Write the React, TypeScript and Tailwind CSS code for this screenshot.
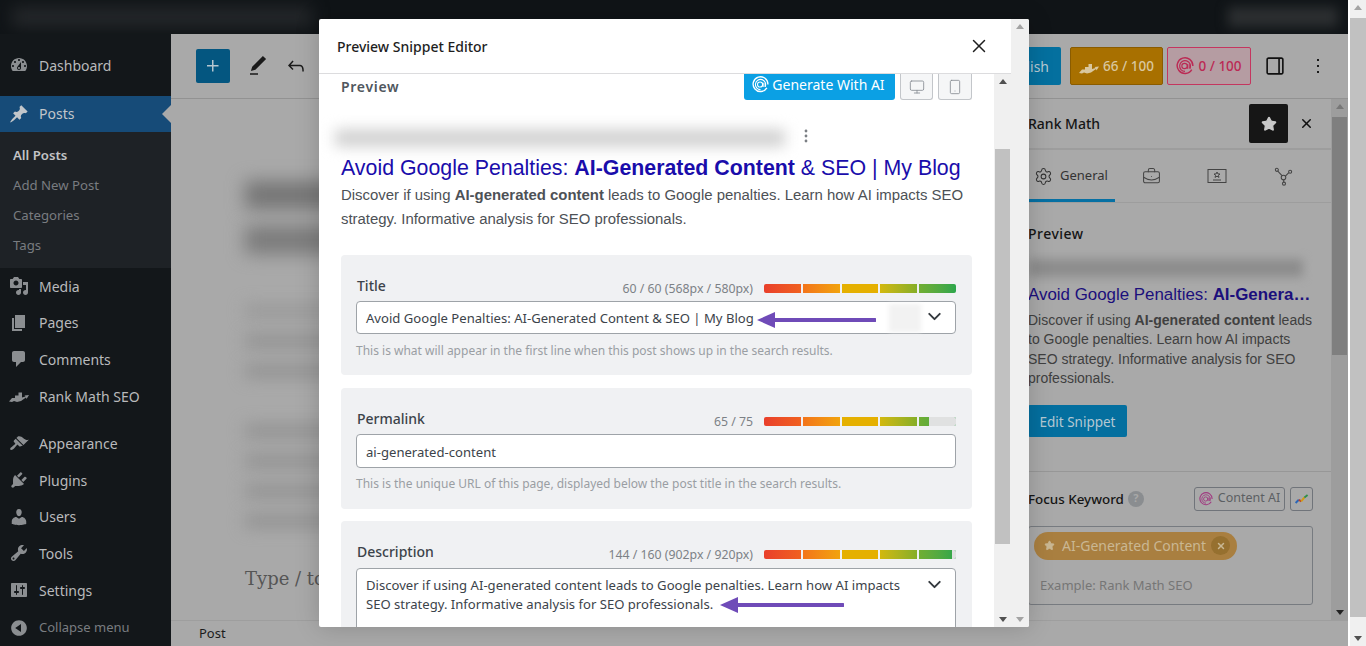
import { ChevronDown, Monitor, Settings, Smartphone, BriefcaseBusiness, Star, X } from 'lucide-react';

const noto = 'font-["Noto_Sans",sans-serif]';
const arial = 'font-["Liberation_Sans",sans-serif]';

const icons = {
  dashboard:
    'M3.76 16h12.48c1.1-1.37 1.76-3.11 1.76-5 0-4.42-3.58-8-8-8s-8 3.58-8 8c0 1.89.66 3.63 1.76 5zM10 4c.55 0 1 .45 1 1s-.45 1-1 1-1-.45-1-1 .45-1 1-1zM6 6c.55 0 1 .45 1 1s-.45 1-1 1-1-.45-1-1 .45-1 1-1zm8 0c.55 0 1 .45 1 1s-.45 1-1 1-1-.45-1-1 .45-1 1-1zm-5.37 5.55L12 7v6c0 1.1-.9 2-2 2s-2-.9-2-2c0-.57.24-1.08.63-1.45zM4 10c.55 0 1 .45 1 1s-.45 1-1 1-1-.45-1-1 .45-1 1-1zm12 0c.55 0 1 .45 1 1s-.45 1-1 1-1-.45-1-1 .45-1 1-1zm-5 3c0-.55-.45-1-1-1s-1 .45-1 1 .45 1 1 1 1-.45 1-1z',
  posts:
    'M10.44 3.02l1.82-1.82 6.36 6.35-1.83 1.82c-1.05-.68-2.48-.57-3.41.36l-.75.75c-.92.93-1.04 2.35-.35 3.41l-1.83 1.82-2.41-2.41-2.8 2.79c-.42.42-3.38 2.71-3.8 2.29s1.86-3.39 2.28-3.81l2.79-2.79L4.1 9.36l1.83-1.82c1.05.69 2.48.57 3.4-.36l.75-.75c.93-.92 1.05-2.35.36-3.41z',
  media:
    'M13 11V4c0-.55-.45-1-1-1h-1.67L9 1H5L3.67 3H2c-.55 0-1 .45-1 1v7c0 .55.45 1 1 1h10c.55 0 1-.45 1-1zM7 4.5c1.38 0 2.5 1.12 2.5 2.5S8.38 9.5 7 9.5 4.5 8.38 4.5 7 5.62 4.5 7 4.5zM14 6h5v10.5c0 1.38-1.12 2.5-2.5 2.5S14 17.88 14 16.5s1.12-2.5 2.5-2.5c.17 0 .34.02.5.05V9h-3V6zm-4 8.05V13h2v3.5c0 1.38-1.12 2.5-2.5 2.5S7 17.88 7 16.5 8.12 14 9.5 14c.17 0 .34.02.5.05z',
  pages: 'M6 15V2h10v13H6zm-1 1h8v2H3V5h2v11z',
  comments: 'M5 2h9c1.1 0 2 .9 2 2v7c0 1.1-.9 2-2 2h-2l-5 5v-5H5c-1.1 0-2-.9-2-2V4c0-1.1.9-2 2-2z',
  rank: 'M0 15.5L3 12H6V9.5H9.5V6.5H13V11.5L16.5 10.5L15.5 9.5L20 9L17.5 13L17 11.5L12 15L8 16L5 15L3 16Z',
  appearance:
    'M14.48 11.06L7.41 3.99l1.5-1.5c.5-.56 2.3-.47 3.51.32 1.21.8 1.43 1.28 2.91 2.1 1.18.64 2.45 1.26 4.45.85zm-.71.71L6.7 4.7 4.93 6.47c-.39.39-.39 1.02 0 1.41l1.06 1.06c.39.39.39 1.03 0 1.42-.6.6-1.43 1.11-2.21 1.69-.35.26-.7.53-1.01.84C1.43 13.23.76 14.89 1.5 15.63s2.4.07 3.74-1.27c.32-.32.58-.67.84-1.01.58-.78 1.09-1.61 1.69-2.21.39-.39 1.02-.39 1.41 0l1.06 1.06c.39.39 1.02.39 1.41 0z',
  plugins:
    'M13.11 4.36L9.87 7.6 8 5.73l3.24-3.24c.35-.34 1.05-.2 1.56.32.52.51.66 1.21.31 1.55zm-8 1.77l.91-1.12 9.01 9.01-1.19.84c-.71.71-2.63 1.16-3.82 1.16H6.14L4.9 17.26c-.59.59-1.54.59-2.12 0-.59-.58-.59-1.53 0-2.12l1.24-1.24v-3.88c0-1.13.4-3.19 1.09-3.89zm7.26 3.97l3.24-3.24c.34-.35 1.04-.21 1.55.31.52.51.66 1.21.31 1.55l-3.24 3.25z',
  users:
    'M10 9.25c-2.27 0-2.73-3.44-2.73-3.44C7 4.02 7.82 2 9.97 2c2.16 0 2.98 2.02 2.71 3.81 0 0-.41 3.44-2.68 3.44zm0 2.57L12.72 10c2.39 0 4.52 2.33 4.52 4.53v2.49s-3.65 1.13-7.24 1.13c-3.65 0-7.24-1.13-7.24-1.13v-2.49c0-2.25 1.94-4.48 4.47-4.48z',
  tools:
    'M16.68 9.77c-1.34 1.34-3.3 1.67-4.95.99l-5.41 6.52c-.99.99-2.59.99-3.58 0s-.99-2.59 0-3.57l6.52-5.42c-.68-1.65-.35-3.61.99-4.95 1.28-1.28 3.12-1.62 4.72-1.06l-2.89 2.89 2.82 2.82 2.86-2.87c.53 1.58.18 3.39-1.08 4.65zM3.81 16.21c.4.39 1.04.39 1.43 0 .4-.4.4-1.04 0-1.43-.39-.4-1.03-.4-1.43 0-.39.39-.39 1.03 0 1.43z',
  settings:
    'M18 16V4c0-.55-.45-1-1-1H3c-.55 0-1 .45-1 1v12c0 .55.45 1 1 1h14c.55 0 1-.45 1-1zM8 11h1c.55 0 1 .45 1 1s-.45 1-1 1H8v1.5c0 .28-.22.5-.5.5s-.5-.22-.5-.5V13H6c-.55 0-1-.45-1-1s.45-1 1-1h1V5.5c0-.28.22-.5.5-.5s.5.22.5.5V11zm5-2h-1c-.55 0-1-.45-1-1s.45-1 1-1h1V5.5c0-.28.22-.5.5-.5s.5.22.5.5V7h1c.55 0 1 .45 1 1s-.45 1-1 1h-1v5.5c0 .28-.22.5-.5.5s-.5-.22-.5-.5V9z',
  collapse:
    'M10 2.16c4.33 0 7.84 3.51 7.84 7.84s-3.51 7.84-7.84 7.84S2.16 14.33 2.16 10 5.71 2.16 10 2.16zm2 11.72V6.12L6.18 9.97z',
};

const Dash = ({ d, className }: { d: string; className: string }) => (
  <svg viewBox="0 0 20 20" className={className} fill="currentColor">
    <path d={d} />
  </svg>
);

const MenuItem = ({ icon, label }: { icon: string; label: string }) => (
  <div className="flex h-[36.6px] shrink-0 items-center">
    <Dash d={icon} className="ml-[9px] h-5 w-5 text-[#8b8e91]" />
    <span className="ml-[10px] text-[14px] text-[#b9babc]">{label}</span>
  </div>
);

const AdminSidebar = () => (
  <aside className={`flex w-[171px] shrink-0 flex-col bg-[#13171a] ${noto}`}>
    <div className="mt-[13px]">
      <MenuItem icon={icons.dashboard} label="Dashboard" />
    </div>
    <div className="relative mt-[12px] flex h-[36px] shrink-0 items-center bg-[#164b78]">
      <Dash d={icons.posts} className="ml-[9px] h-5 w-5 text-[#c2c6ca]" />
      <span className="ml-[10px] text-[14px] text-[#c2c6ca]">Posts</span>
      <span className="absolute right-0 top-[9px] h-0 w-0 border-y-[9px] border-r-[9px] border-y-transparent border-r-[#a9a9a9]" />
    </div>
    <div className="flex h-[136.4px] shrink-0 flex-col bg-[#1e2226] pl-[13px] pt-[8px] text-[13.2px] text-[#797c80]">
      <span className="h-[30.2px] font-semibold leading-[30px] text-[#c2c3c5]">All Posts</span>
      <span className="h-[30.2px] leading-[30px]">Add New Post</span>
      <span className="h-[30.2px] leading-[30px]">Categories</span>
      <span className="h-[30.2px] leading-[30px]">Tags</span>
    </div>
    <MenuItem icon={icons.media} label="Media" />
    <MenuItem icon={icons.pages} label="Pages" />
    <MenuItem icon={icons.comments} label="Comments" />
    <MenuItem icon={icons.rank} label="Rank Math SEO" />
    <div className="mt-[11px]">
      <MenuItem icon={icons.appearance} label="Appearance" />
    </div>
    <MenuItem icon={icons.plugins} label="Plugins" />
    <MenuItem icon={icons.users} label="Users" />
    <MenuItem icon={icons.tools} label="Tools" />
    <MenuItem icon={icons.settings} label="Settings" />
    <div className="flex h-[36.6px] shrink-0 items-center pt-[2px]">
      <Dash d={icons.collapse} className="ml-[9px] h-5 w-5 text-[#8b8e91]" />
      <span className="ml-[10px] text-[13px] text-[#797c80]">Collapse menu</span>
    </div>
  </aside>
);

const RankBars = ({ className }: { className: string }) => (
  <svg viewBox="0 0 20 14" className={className} fill="currentColor">
    <path d="M0 13.5L3 10H6V7.5H9.5V4.5H13V9.5L16.5 8.5L15.5 7.5L20 7L17.5 11L17 9.5L12 13L8 14L5 13L3 14Z" />
  </svg>
);

const AiLogo = ({ className }: { className: string }) => (
  <svg viewBox="0 0 20 20" className={className} fill="none" stroke="currentColor">
    <path d="M17.5 14A8.7 8.7 0 1 1 18.7 10" strokeWidth="1.6" />
    <path d="M15.5 12.5A6 6 0 1 0 10 16" strokeWidth="1.3" />
    <circle cx="9.5" cy="10" r="3" strokeWidth="1.3" />
    <path d="M13 8v5M15.5 8v5" strokeWidth="1.4" />
  </svg>
);

const EditorHeader = () => (
  <header className="flex h-[65px] shrink-0 items-center border-b border-[#929292] pl-[25px] pr-[18px]">
    <div className="flex h-[34px] w-[34px] items-center justify-center rounded-[2px] bg-[#045680]">
      <svg viewBox="0 0 24 24" className="h-6 w-6" fill="#b6c6d0">
        <path d="M11 12.5V17.5H12.5V12.5H17.5V11H12.5V6H11V11H6V12.5H11Z" />
      </svg>
    </div>
    <svg viewBox="0 0 24 24" className="ml-[16px] h-6 w-6" fill="#1a1a1a">
      <path d="M20.1 5.1L16.9 2 6.2 12.7l-1.3 4.4 4.5-1.3L20.1 5.1zM4 20.8h8v-1.5H4v1.5z" />
    </svg>
    <svg viewBox="0 0 24 24" className="ml-[14px] h-6 w-6" fill="#1a1a1a">
      <path d="M18.3 11.7c-.6-.6-1.4-.9-2.3-.9H6.7l2.9-3.3-1.1-1-4.5 5L8.5 16l1-1-2.7-2.7H16c.5 0 .9.2 1.3.5 1 1 1 3.4 1 4.5v.3h1.5v-.2c0-1.5 0-4.3-1.5-5.7z" />
    </svg>
    <div className={`ml-auto flex items-center ${noto}`}>
      <div className="flex h-[38px] w-[80px] items-center justify-end rounded-[2px] bg-[#04709f] pr-[12px] text-[14px] text-[#b6c9d3]">
        Publish
      </div>
      <div className="ml-[9px] flex h-[38px] w-[93px] items-center justify-center gap-[4px] rounded-[2px] border border-[#8a5c00] bg-[#a87000] text-[13.5px] font-medium text-[#d9c79f]">
        <RankBars className="h-[15px] w-[20px]" />
        66 / 100
      </div>
      <div className="ml-[4px] flex h-[38px] w-[84px] items-center justify-center gap-[4px] rounded-[2px] border border-[#c4365f] bg-[#b59ca2] text-[13.5px] font-medium text-[#bb2a54]">
        <AiLogo className="h-[18px] w-[18px]" />
        0 / 100
      </div>
      <svg viewBox="0 0 24 24" className="ml-[11px] h-[26px] w-[26px]" fill="#111">
        <path d="M18 4H6c-1.1 0-2 .9-2 2v12c0 1.1.9 2 2 2h12c1.1 0 2-.9 2-2V6c0-1.1-.9-2-2-2zM15 18.5H6c-.3 0-.5-.2-.5-.5V6c0-.3.2-.5.5-.5h9v13zm3.5-.5c0 .3-.2.5-.5.5h-1.5v-13H18c.3 0 .5.2.5.5v12z" />
      </svg>
      <svg viewBox="0 0 24 24" className="ml-[18px] h-6 w-6" fill="#1a1a1a">
        <path d="M13 19h-2v-2h2v2zm0-6h-2v-2h2v2zm0-6h-2V5h2v2z" />
      </svg>
    </div>
  </header>
);

const MainColumn = () => (
  <div className="min-w-0 flex-1 overflow-hidden pl-[74px]">
    <div className="mt-[82px] h-[28px] w-[300px] bg-[#757575] blur-[9px]" />
    <div className="mt-[17px] h-[28px] w-[300px] bg-[#7b7b7b] blur-[9px]" />
    <div className="mt-[50px] h-[14px] w-[240px] bg-[#9a9a9a] blur-[8px]" />
    <div className="mt-[16px] h-[14px] w-[240px] bg-[#939393] blur-[8px]" />
    <div className="mt-[16px] h-[14px] w-[240px] bg-[#939393] blur-[8px]" />
    <div className="mt-[46px] h-[14px] w-[240px] bg-[#939393] blur-[8px]" />
    <div className="mt-[16px] h-[14px] w-[240px] bg-[#939393] blur-[8px]" />
    <div className="mt-[16px] h-[14px] w-[240px] bg-[#939393] blur-[8px]" />
    <div className="mt-[16px] h-[14px] w-[240px] bg-[#939393] blur-[8px]" />
    <p className={`mt-[38px] whitespace-nowrap font-["DejaVu_Serif",serif] text-[18px] leading-[26px] text-[#555]`}>Type / to choose a block</p>
  </div>
);

const ScrollArrows = ({ up, down }: { up: string; down: string }) => (
  <>
    <span className={`absolute left-1/2 top-[5px] h-0 w-0 -translate-x-1/2 border-x-[4px] border-b-[5px] border-x-transparent ${up}`} />
    <span className={`absolute bottom-[5px] left-1/2 h-0 w-0 -translate-x-1/2 border-x-[4px] border-t-[5px] border-x-transparent ${down}`} />
  </>
);

const RankPanel = () => (
  <div className={`flex w-[329px] shrink-0 ${noto}`}>
    <div className="w-[312px] shrink-0 pl-[9px]">
      <div className="-ml-[9px] flex h-[51px] items-center border-b-2 border-[#9d9d9d] pl-[9px]">
        <span className="text-[14px] font-medium text-[#151515]">Rank Math</span>
        <div className="ml-[149px] flex h-[39px] w-[39px] items-center justify-center rounded-[2px] bg-[#161616]">
          <Star className="h-[16px] w-[16px] fill-[#c8c8c8] text-[#c8c8c8]" />
        </div>
        <X className="ml-[11px] h-[15px] w-[15px] text-[#111]" strokeWidth={2.4} />
      </div>
      <div className="-ml-[9px] flex h-[53px] items-center border-b border-[#9d9d9d] pl-[15px]">
        <div className="relative flex h-full w-[81px] items-center">
          <Settings className="h-[19px] w-[19px] text-[#333]" strokeWidth={1.3} />
          <span className="ml-[7px] text-[13px] text-[#333]">General</span>
          <span className="absolute -left-[15px] bottom-0 h-[3px] w-[96px] bg-[#0670a3]" />
        </div>
        <BriefcaseBusiness className="ml-[27px] h-[19px] w-[19px] text-[#444]" strokeWidth={1.3} />
        <svg viewBox="0 0 20 16" className="ml-[46px] h-[16px] w-[20px]" fill="none" stroke="#444" strokeWidth="1">
          <rect x="1" y="1.5" width="18" height="13" />
          <path d="M10 4l1 2h2l-1.6 1.4.6 2-2-1.2-2 1.2.6-2L7 6h2zM6 12h8" />
        </svg>
        <svg viewBox="0 0 20 20" className="ml-[47px] h-[19px] w-[19px]" fill="none" stroke="#444" strokeWidth="1.1">
          <circle cx="10" cy="11" r="2.4" />
          <circle cx="3" cy="3" r="1.6" />
          <circle cx="17" cy="5" r="1.6" />
          <circle cx="10.5" cy="17.5" r="1.6" />
          <path d="M4 4.4l4.4 4.6M15.6 6l-3.6 3.6M10.2 13.4v2.5" />
        </svg>
      </div>
      <p className="mt-[21px] text-[14px] font-medium leading-[20px] tracking-[0.5px] text-[#151515]">Preview</p>
      <div className="mt-[15px] h-[18px] w-[275px] bg-[#8d8d8d] blur-[5px]" />
      <p className={`mt-[8px] whitespace-nowrap text-[16.9px] leading-[20px] text-[#1b0f7c] ${arial}`}>
        Avoid Google Penalties: <b>AI-Genera…</b>
      </p>
      <p className={`mt-[6px] w-[290px] text-[14px] leading-[19.4px] text-[#404040] ${arial}`}>
        Discover if using <b>AI-generated content</b> leads to Google penalties. Learn how AI impacts SEO strategy. Informative analysis for SEO professionals.
      </p>
      <div className="mt-[16px] flex h-[32px] w-[99px] items-center justify-center rounded-[2px] bg-[#046f9f] pt-[2px] text-[13.5px] text-[#b4c8d2]">Edit Snippet</div>
      <div className="-ml-[9px] mt-[34px] border-b border-[#979797]" />
      <div className="mt-[15px] flex h-[24px] w-[285px] items-center">
        <span className="text-[13.4px] font-medium text-[#151515]">Focus Keyword</span>
        <span className="ml-[4px] flex h-[16px] w-[16px] items-center justify-center rounded-full bg-[#8a8d90] text-[11px] font-bold text-[#a8a8a8]">?</span>
        <div className="ml-auto flex items-center gap-[5px]">
          <div className="flex h-[24px] w-[91px] items-center justify-center gap-[5px] rounded-[3px] border border-[#70747a] text-[12.5px] text-[#5c5f63]">
            <AiLogo className="h-[14px] w-[14px] text-[#a03a80]" />
            Content AI
          </div>
          <div className="flex h-[24px] w-[23px] items-center justify-center rounded-[3px] border border-[#70747a]">
            <svg viewBox="0 0 20 16" className="h-[14px] w-[16px]" fill="none" strokeWidth="2.4">
              <path d="M2 13l4-4" stroke="#2a66b8" />
              <path d="M6 9l3 2" stroke="#b8402e" />
              <path d="M9 11l4-5" stroke="#d39a14" />
              <path d="M13 6l4-3" stroke="#2f8f4a" />
            </svg>
          </div>
        </div>
      </div>
      <div className="mt-[15px] h-[79px] w-[285px] rounded-[3px] border border-[#777b80] pl-[5px] pt-[5px]">
        <div className="flex h-[28px] w-[203px] items-center rounded-full bg-[#a97f40] pl-[10px] text-[#c9b793]">
          <Star className="h-[11px] w-[11px] fill-current" />
          <span className="ml-[7px] text-[14px]">AI-Generated Content</span>
          <span className="ml-[5px] flex h-[19px] w-[19px] items-center justify-center rounded-full bg-[#96702f]">
            <X className="h-[10px] w-[10px]" strokeWidth={3.5} />
          </span>
        </div>
        <p className="ml-[6px] mt-[16px] text-[13px] leading-[18px] text-[#767676]">Example: Rank Math SEO</p>
      </div>
    </div>
    <div className="relative h-full w-[17px] shrink-0 bg-[#9d9d9d]">
      <ScrollArrows up="border-b-[#777]" down="border-t-[#222]" />
      <div className="ml-[1px] mt-[18px] h-[238px] w-[15px] bg-[#7f7f7f]" />
    </div>
  </div>
);

type BarProps = { empty?: string };

const ScoreBar = ({ empty }: BarProps) => (
  <div className="relative flex h-[9px] w-[192px] gap-[2px] overflow-hidden rounded-[2px]">
    <span className="flex-1 bg-gradient-to-r from-[#e93f2b] to-[#f0601f]" />
    <span className="flex-1 bg-gradient-to-r from-[#f3741a] to-[#f1a30c]" />
    <span className="flex-1 bg-[#e5b000]" />
    <span className="flex-1 bg-gradient-to-r from-[#d2b80c] to-[#85ae27]" />
    <span className="flex-1 bg-gradient-to-r from-[#70ae32] to-[#2ba64b]" />
    {empty && <span className="absolute inset-y-0 right-0 bg-[#e0e1e1]" style={{ width: empty }} />}
  </div>
);

const FieldHead = ({ label, count, empty }: { label: string; count: string; empty?: string }) => (
  <div className="flex h-[20px] items-start">
    <span className="ml-[1px] text-[14px] font-medium leading-[20px] text-[#3c434a]">{label}</span>
    <span className="ml-auto mt-[3px] text-[12.3px] leading-[20px] text-[#7c8186]">{count}</span>
    <span className="ml-[11px] mt-[8px]">
      <ScoreBar empty={empty} />
    </span>
  </div>
);

const Arrow = ({ className, width }: { className: string; width: number }) => (
  <svg viewBox={`0 0 ${width} 16`} width={width} height={16} className={className}>
    <path d={`M18 8H${width - 1}`} stroke="#6f4bb8" strokeWidth="4" strokeLinecap="round" />
    <path d="M0 8L18 0V16Z" fill="#6f4bb8" />
  </svg>
);

const PreviewModal = () => (
  <div className={`absolute left-[319px] top-[19px] flex h-[608px] w-[710px] overflow-hidden rounded-[2px] bg-white shadow-[0_0_24px_rgba(0,0,0,0.18)] ${noto}`}>
    <div className="flex w-[692px] shrink-0 flex-col">
      <div className="flex h-[55px] shrink-0 items-center justify-between border-b border-[#dcdcde] pl-[18px] pr-[21px]">
        <h2 className="text-[14px] font-medium text-[#1e1e1e]">Preview Snippet Editor</h2>
        <X className="h-[22px] w-[22px] text-[#1e1e1e]" strokeWidth={1.6} />
      </div>
      <div className="flex min-h-0 flex-1">
        <div className="w-[675px] shrink-0 overflow-hidden pl-[22px] pr-[22px]">
          <div className="flex h-[26px] items-start">
            <span className="mt-[3px] text-[14px] font-semibold leading-[20px] tracking-[0.7px] text-[#50575e]">Preview</span>
            <div className="ml-auto flex gap-[5px]">
              <div className="flex h-[26px] w-[151px] items-center justify-center gap-[3px] rounded-b-[3px] bg-[#0ba0e4] pb-[6px] pr-[2px] text-[14px] text-white">
                <AiLogo className="h-[17px] w-[17px]" />
                Generate With AI
              </div>
              <div className="flex h-[26px] w-[33px] items-center justify-center rounded-b-[3px] border border-t-0 border-[#c3c6ca] bg-[#f5f6f7]">
                <Monitor className="h-[16px] w-[16px] text-[#8a8f96]" strokeWidth={1.3} />
              </div>
              <div className="flex h-[26px] w-[34px] items-center justify-center rounded-b-[3px] border border-t-0 border-[#c3c6ca] bg-[#f5f6f7]">
                <Smartphone className="h-[16px] w-[16px] text-[#8a8f96]" strokeWidth={1.3} />
              </div>
            </div>
          </div>
          <div className="-ml-[6px] mt-[19px] flex h-[37px] items-center">
            <div className="h-[18px] w-[450px] bg-[#d2d2d2] blur-[7px]" />
            <svg viewBox="0 0 4 14" className="ml-[19px] -mt-[4px] h-[14px] w-[4px]" fill="#7b7f84">
              <circle cx="2" cy="2" r="1.4" />
              <circle cx="2" cy="7" r="1.4" />
              <circle cx="2" cy="12" r="1.4" />
            </svg>
          </div>
          <h3 className={`-mt-[1px] whitespace-nowrap text-[21.35px] leading-[26px] text-[#1a0dab] ${arial}`}>
            Avoid Google Penalties: <b>AI-Generated Content</b> &amp; SEO | My Blog
          </h3>
          <p className={`mt-[2px] text-[14.93px] leading-[24px] text-[#4d5156] ${arial}`}>
            Discover if using <b>AI-generated content</b> leads to Google penalties. Learn how AI impacts SEO strategy. Informative analysis for SEO professionals.
          </p>

          <section className="mt-[24px] h-[120px] rounded-[4px] bg-[#f0f1f3] pl-[15px] pr-[16px] pt-[21px]">
            <FieldHead label="Title" count="60 / 60 (568px / 580px)" />
            <div className="relative mt-[5px] flex h-[33px] items-center rounded-[4px] border border-[#9ea3a8] bg-white pl-[9px] pt-[3px] text-[13.1px] text-[#3c434a]">
              Avoid Google Penalties: AI-Generated Content &amp; SEO | My Blog
              <Arrow className="absolute left-[400px] top-[10px]" width={119} />
              <span className="absolute left-[532px] top-[2px] h-[28px] w-[32px] bg-[#f2f2f2] blur-[2px]" />
              <ChevronDown className="absolute right-[10px] top-[4px] h-[21px] w-[21px] text-[#33383d]" strokeWidth={2.2} />
            </div>
            <p className="mt-[7px] text-[12px] leading-[20px] text-[#9a9ea3]">This is what will appear in the first line when this post shows up in the search results.</p>
          </section>

          <section className="mt-[13px] h-[121px] rounded-[4px] bg-[#f0f1f3] pl-[15px] pr-[16px] pt-[21px]">
            <FieldHead label="Permalink" count="65 / 75" empty="27px" />
            <div className="mt-[5px] flex h-[34px] items-center rounded-[4px] border border-[#9ea3a8] bg-white pl-[9px] pt-[3px] text-[13.1px] text-[#3c434a]">ai-generated-content</div>
            <p className="mt-[6px] text-[12px] leading-[20px] text-[#9a9ea3]">This is the unique URL of this page, displayed below the post title in the search results.</p>
          </section>

          <section className="mt-[12px] h-[140px] rounded-[4px] bg-[#f0f1f3] pl-[15px] pr-[16px] pt-[21px]">
            <FieldHead label="Description" count="144 / 160 (902px / 920px)" empty="4px" />
            <div className="relative mt-[6px] h-[90px] rounded-[4px] border border-[#9ea3a8] bg-white pl-[9px] pr-[50px] pt-[7px] text-[13.1px] leading-[19px] text-[#3c434a]">
              Discover if using AI-generated content leads to Google penalties. Learn how AI impacts SEO strategy. Informative analysis for SEO professionals.
              <Arrow className="absolute left-[363px] top-[28px]" width={124} />
              <ChevronDown className="absolute right-[10px] top-[5px] h-[21px] w-[21px] text-[#33383d]" strokeWidth={2.2} />
            </div>
          </section>
        </div>
        <div className="relative w-[17px] shrink-0 bg-[#f0f0f0]">
          <ScrollArrows up="border-b-[#505050]" down="border-t-[#505050]" />
          <div className="ml-[1px] mt-[75px] h-[395px] w-[15px] bg-[#c1c1c1]" />
        </div>
      </div>
    </div>
    <div className="relative w-[18px] shrink-0 bg-[#f0f0f0]">
      <ScrollArrows up="border-b-[#a3a3a3]" down="border-t-[#a3a3a3]" />
    </div>
  </div>
);

export default function App() {
  return (
    <div className={`relative flex h-[646px] w-[1366px] overflow-hidden bg-white ${noto}`}>
      <div className="flex w-[1348px] shrink-0 flex-col">
        <div className="flex h-[34px] shrink-0 items-center overflow-hidden bg-[#101417]">
          <div className="ml-[12px] h-[20px] w-[300px] bg-[#24272a] blur-[8px]" />
          <div className="ml-auto mr-[10px] h-[20px] w-[110px] bg-[#2c2f31] blur-[6px]" />
        </div>
        <div className="flex min-h-0 flex-1">
          <AdminSidebar />
          <div className="flex min-w-0 flex-1 flex-col bg-[#a9a9a9]">
            <EditorHeader />
            <div className="flex min-h-0 flex-1">
              <MainColumn />
              <RankPanel />
            </div>
            <div className="flex h-[26px] shrink-0 items-center border-t border-[#9e9e9e] pl-[28px] text-[13px] text-[#1c1c1c]">Post</div>
          </div>
        </div>
      </div>
      <div className="relative ml-[2px] w-[16px] shrink-0 bg-[#f0f0f0]">
        <ScrollArrows up="border-b-[#a3a3a3]" down="border-t-[#505050]" />
        <div className="mt-[18px] h-[599px] w-[16px] bg-[#c1c1c1]" />
      </div>
      <PreviewModal />
    </div>
  );
}
